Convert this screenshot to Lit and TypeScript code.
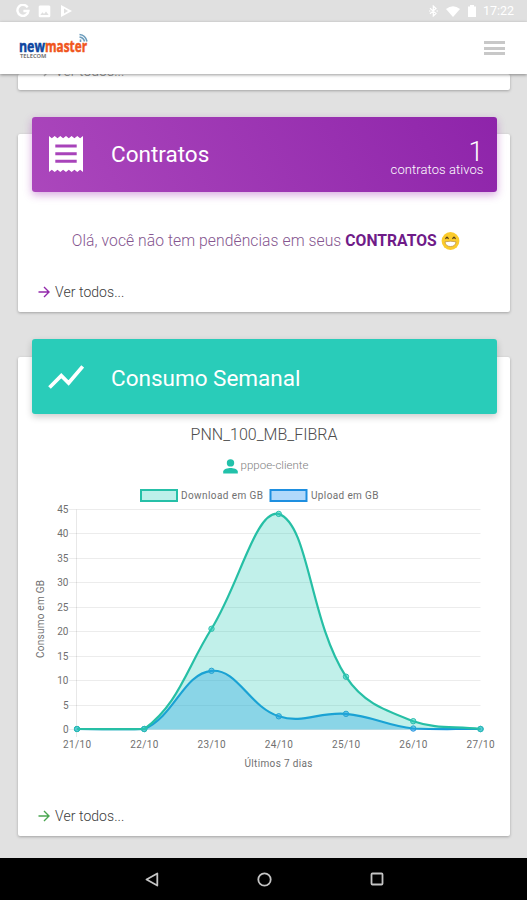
import { LitElement, html, svg, css } from "lit";
import { customElement, property } from "lit/decorators.js";

type Pt = { x: number; y: number };

const DAYS = ["21/10", "22/10", "23/10", "24/10", "25/10", "26/10", "27/10"];
const DOWNLOAD = [0.1, 0.1, 20.6, 44.1, 10.8, 1.7, 0.1];
const UPLOAD = [0.1, 0.1, 12, 2.7, 3.2, 0.2, 0.1];
const TICKS = [0, 5, 10, 15, 20, 25, 30, 35, 40, 45];

// Plot area inside the chart's own coordinate system
const LEFT = 59;
const RIGHT = 462.5;
const TOP = 24.5;
const BOTTOM = 244.5;

const toPoints = (values: number[]): Pt[] =>
  values.map((v, i) => ({
    x: LEFT + ((RIGHT - LEFT) * i) / (values.length - 1),
    y: BOTTOM - ((BOTTOM - TOP) * v) / 45,
  }));

// Smooth cubic path with tension, control points kept inside the plot area
function curve(points: Pt[], tension = 0.4): string {
  const clamp = (y: number) => Math.min(BOTTOM, Math.max(TOP, y));
  const controls = points.map((p, i) => {
    const prev = points[i - 1] ?? p;
    const next = points[i + 1] ?? p;
    const d01 = Math.hypot(p.x - prev.x, p.y - prev.y);
    const d12 = Math.hypot(next.x - p.x, next.y - p.y);
    const a = (tension * d01) / (d01 + d12);
    const b = (tension * d12) / (d01 + d12);
    return {
      inX: p.x - a * (next.x - prev.x),
      inY: clamp(p.y - a * (next.y - prev.y)),
      outX: p.x + b * (next.x - prev.x),
      outY: clamp(p.y + b * (next.y - prev.y)),
    };
  });
  let d = `M${points[0].x} ${points[0].y}`;
  for (let i = 1; i < points.length; i++) {
    const c0 = controls[i - 1];
    const c1 = controls[i];
    d += ` C${c0.outX} ${c0.outY} ${c1.inX} ${c1.inY} ${points[i].x} ${points[i].y}`;
  }
  return d;
}

@customElement("status-bar")
export class StatusBar extends LitElement {
  static styles = css`
    :host {
      display: flex;
      justify-content: space-between;
      align-items: center;
      height: 22px;
      box-sizing: border-box;
      padding: 0 12px 0 16px;
      background: #e0e0e0;
      color: #fff;
      fill: #fff;
    }
    .group { display: flex; align-items: center; }
    .left { gap: 8px; }
    .bt { margin-right: 8px; }
    .wifi { margin-right: 8px; }
    .batt { margin-right: 7px; }
    svg { display: block; }
    .clock { font-size: 12.5px; line-height: 22px; width: 32px; white-space: nowrap; }
  `;
  render() {
    return html`
      <div class="group left">
        <svg width="14" height="14" viewBox="0 0 14 14">
          <path d="M11.6 3.4A5.5 5.5 0 1 0 12.4 7H7.4" fill="none" stroke="#fff" stroke-width="2.4" />
        </svg>
        <svg width="13" height="13" viewBox="0 0 13 13">
          <path fill-rule="evenodd" d="M2 .5h9A1.3 1.3 0 0 1 12.3 2v9a1.3 1.3 0 0 1-1.3 1.3H2A1.3 1.3 0 0 1 .7 11V2A1.3 1.3 0 0 1 2 .5ZM2.3 10h8.4L8 6.4 6 9 4.500 7.300Z" />
        </svg>
        <svg width="14" height="14" viewBox="0 0 14 14">
          <path d="M2 1 13 7 2 13Z" /><path d="M5 4.500 9 7 5 9.500Z" fill="#e0e0e0" />
        </svg>
      </div>
      <div class="group">
        <svg class="bt" width="9" height="12" viewBox="0 0 9 12">
          <path d="M1 3.200 7 8.500 4.300 11V1L7 3.500 1 8.800M0 6h1.500M7.500 6H9" fill="none" stroke="#fff" stroke-width="1.200" />
        </svg>
        <svg class="wifi" width="14" height="11" viewBox="0 0 14 11"><path d="M0 3Q7-2.500 14 3L7 11Z" /></svg>
        <svg class="batt" width="8" height="12" viewBox="0 0 8 12"><path d="M0 1.500h2V0h4v1.500h2V12H0Z" /></svg>
        <span class="clock">17:22</span>
      </div>
    `;
  }
}

@customElement("top-header")
export class TopHeader extends LitElement {
  static styles = css`
    :host {
      display: flex;
      justify-content: space-between;
      align-items: center;
      height: 52px;
      box-sizing: border-box;
      padding: 0 22px 0 18px;
      background: #fff;
      box-shadow: 0 1px 3px rgba(0, 0, 0, 0.4);
      position: relative;
    }
    svg { display: block; overflow: visible; }
    .brand { font: 700 15.500px "Open Sans", sans-serif; stroke-width: 0.5; }
    .new { fill: #0d459f; stroke: #0d459f; }
    .master { fill: #f0561d; stroke: #f0561d; }
    .tag { font: 700 4.5px "Open Sans", sans-serif; fill: #777; }
    .menu { display: grid; gap: 2.500px; width: 21px; }
    .menu i { height: 3px; background: #c8c8c8; }
  `;
  render() {
    return html`
      <svg width="74" height="32" viewBox="0 0 74 32">
        <text class="brand new" x="1" y="20" textLength="26" lengthAdjust="spacingAndGlyphs">new</text>
        <text class="brand master" x="27" y="20" textLength="42" lengthAdjust="spacingAndGlyphs">master</text>
        <text class="tag" x="2" y="25.500" textLength="26.500" lengthAdjust="spacingAndGlyphs">TELECOM</text>
        <path d="M61.500 2.500Q67.500 3 69 9.500M61.500 5Q65.500 5.500 66.500 9.500M62.500 7.500v2.500" fill="none" stroke="#6b9cbc" stroke-width="1.600" />
      </svg>
      <div class="menu"><i></i><i></i><i></i></div>
    `;
  }
}

@customElement("see-all")
export class SeeAll extends LitElement {
  @property() color = "#8e24aa";
  static styles = css`
    :host {
      display: flex;
      align-items: center;
      gap: 5px;
      font-size: 14px;
      line-height: 18px;
      font-weight: 300;
      color: #3c3c3c;
    }
    svg { display: block; }
    span { letter-spacing: 0.06px; }
  `;
  render() {
    return html`
      <svg width="12" height="12" viewBox="0 0 12 12">
        <path d="M0.500 6H11M6 1 11 6 6 11" fill="none" stroke=${this.color} stroke-width="1.400" />
      </svg>
      <span>Ver todos...</span>
    `;
  }
}

@customElement("usage-chart")
export class UsageChart extends LitElement {
  static styles = css`
    :host { display: block; }
    svg { display: block; font-family: Roboto, sans-serif; }
    text { font-size: 10px; fill: #707070; }
    .grid { stroke: rgba(0, 0, 0, 0.075); stroke-width: 1; }
    .axis { stroke: rgba(0, 0, 0, 0.09); stroke-width: 1; }
    .down-fill { fill: rgba(41, 204, 184, 0.29); }
    .down-line { fill: none; stroke: #26bfa5; stroke-width: 2.200; }
    .down-dot { fill: rgba(41, 204, 184, 0.5); stroke: #2bbfae; }
    .up-fill { fill: rgba(33, 150, 243, 0.35); }
    .up-line { fill: none; stroke: #1492e0; stroke-width: 2.200; }
    .up-dot { fill: rgba(33, 150, 243, 0.5); stroke: #2295dc; }
    .down-key { fill: #bdf0ea; stroke: #26c0a8; stroke-width: 2; }
    .up-key { fill: #b1d9fb; stroke: #1e8fe0; stroke-width: 2; }
  `;
  private fill(values: number[], name: string) {
    return svg`<path class="${name}-fill" d="${curve(toPoints(values))} L${RIGHT} ${BOTTOM} L${LEFT} ${BOTTOM} Z"></path>`;
  }
  private line(values: number[], name: string) {
    const pts = toPoints(values);
    return svg`
      <path class="${name}-line" d=${curve(pts)}></path>
      ${pts.map((p) => svg`<circle class="${name}-dot" cx=${p.x} cy=${p.y} r="2.700"></circle>`)}
    `;
  }
  render() {
    const xs = toPoints(DOWNLOAD);
    return html`
      <svg width="492" height="290" viewBox="0 0 492 290">
        <rect class="down-key" x="123" y="5" width="36" height="11"></rect>
        <text x="163" y="14" textLength="82">Download em GB</text>
        <rect class="up-key" x="252.500" y="5" width="36" height="11"></rect>
        <text x="293" y="14" textLength="67.500">Upload em GB</text>
        ${TICKS.map((t) => {
          const y = BOTTOM - ((BOTTOM - TOP) * t) / 45;
          const row = Math.floor(y) + 0.5;
          return svg`
            <line class="grid" x1="51" x2=${RIGHT} y1=${row} y2=${row}></line>
            <text x="50.500" y=${y + 3.5} text-anchor="end">${t}</text>`;
        })}
        <line class="axis" x1="58.500" x2="58.500" y1=${TOP} y2="252"></line>
        ${this.fill(UPLOAD, "up")} ${this.line(UPLOAD, "up")}
        ${this.fill(DOWNLOAD, "down")} ${this.line(DOWNLOAD, "down")}
        ${DAYS.map((d, i) => svg`<text x=${xs[i].x} y="263" text-anchor="middle" textLength="28">${d}</text>`)}
        <text x="260.500" y="282" text-anchor="middle" textLength="68">Últimos 7 dias</text>
        <text transform="translate(26 134) rotate(-90)" text-anchor="middle" textLength="78">Consumo em GB</text>
      </svg>
    `;
  }
}

@customElement("nav-bar")
export class NavBar extends LitElement {
  static styles = css`
    :host {
      display: flex;
      justify-content: center;
      align-items: center;
      gap: 98px;
      height: 42px;
      box-sizing: border-box;
      padding-left: 1px;
      background: #000;
    }
    svg { display: block; fill: none; stroke: #c4c4c4; stroke-width: 1.800; }
  `;
  render() {
    return html`
      <svg width="14" height="15" viewBox="0 0 14 15"><path d="M12.300 1.500v12L1.500 7.500Z" stroke-linejoin="round" /></svg>
      <svg width="15" height="15" viewBox="0 0 15 15"><circle cx="7.500" cy="7.500" r="6.200" /></svg>
      <svg width="14" height="14" viewBox="0 0 14 14"><rect x="1.500" y="1.500" width="11" height="11" rx="1" /></svg>
    `;
  }
}

@customElement("app-root")
export class AppRoot extends LitElement {
  static styles = css`
    :host {
      display: flex;
      flex-direction: column;
      width: 527px;
      height: 900px;
      overflow: hidden;
      background: #e1e1e1;
      font-family: Roboto, "Noto Sans", sans-serif;
    }
    svg { display: block; }
    status-bar, top-header, nav-bar { flex: none; }
    top-header { z-index: 1; }
    main {
      flex: 1;
      min-height: 0;
      display: flex;
      flex-direction: column;
      padding: 0 17px 0 18px;
      overflow: hidden;
    }
    .card {
      display: flex;
      flex-direction: column;
      flex: none;
      box-sizing: border-box;
      background: #fff;
      border-radius: 2px;
      box-shadow: 0 1px 3px rgba(0, 0, 0, 0.28);
    }
    .previous { height: 16px; }
    .previous see-all { margin: -12px 0 0 20px; opacity: 0.6; }
    .contracts { height: 178px; margin-top: 44px; }
    .usage { height: 479px; margin-top: 45px; }
    .banner {
      display: flex;
      align-items: center;
      flex: none;
      height: 75px;
      box-sizing: border-box;
      margin: -18px 13.500px 0;
      padding: 0 13px 0 17px;
      border-radius: 3px;
      color: #fff;
    }
    .contracts .banner { margin-top: -17.500px; }
    .purple {
      background: linear-gradient(60deg, #ab47bc, #8e24aa);
      box-shadow: 0 3px 8px rgba(156, 39, 176, 0.4);
    }
    .teal {
      background: #29ccb9;
      box-shadow: 0 3px 7px rgba(0, 0, 0, 0.2);
    }
    .icon { width: 36px; margin: 0 27.500px 0 -1px; }
    .title {
      flex: 1;
      padding-top: 3px;
      font-size: 22.500px;
      line-height: 30px;
      white-space: nowrap;
    }
    .purple .title { padding-top: 0; }
    .count { text-align: right; font-weight: 300; padding-top: 5px; }
    .number { font-size: 27px; line-height: 26px; padding-top: 3px; }
    .unit { font-size: 13px; line-height: 16px; margin-top: -3px; white-space: nowrap; letter-spacing: 0.08px; }
    .message {
      display: flex;
      justify-content: center;
      align-items: center;
      margin: 39.500px 0 0 4px;
      font-size: 15.700px;
      line-height: 20px;
      font-weight: 300;
      color: #85568f;
      white-space: nowrap;
    }
    .message span { letter-spacing: 0.06px; }
    .message b { font-weight: 700; color: #6f1b88; margin: 0 4.500px 0 4px; }
    .card > see-all { margin-left: 20px; }
    .contracts > see-all { margin-top: 32px; }
    .plan {
      margin-top: 11px;
      text-align: center;
      font-size: 16px;
      line-height: 20px;
      font-weight: 300;
      color: #4c4c4c;
    }
    .login {
      display: flex;
      justify-content: center;
      align-items: center;
      gap: 3px;
      height: 16px;
      margin: 12px 0 12px 3px;
      font-size: 11.500px;
      font-weight: 300;
      color: #808080;
    }
    .login svg { margin-top: 3px; }
    .usage > see-all { margin-top: 32px; }
  `;
  render() {
    return html`
      <status-bar></status-bar>
      <top-header></top-header>
      <main>
        <section class="card previous"><see-all color="#888"></see-all></section>

        <section class="card contracts">
          <div class="banner purple">
            <svg class="icon" width="36" height="38" viewBox="0 0 36 38">
              <path
                fill="#fff"
                fill-rule="evenodd"
                d="M1 1l2.800 2.300L6.700 1l2.800 2.300L12.300 1l2.800 2.300L18 1l2.800 2.300L23.600 1l2.800 2.300L29.300 1l2.800 2.300L35 1v36l-2.900-2.300L29.300 37l-2.900-2.300L23.600 37l-2.800-2.300L18 37l-2.900-2.300L12.300 37l-2.800-2.300L6.700 37l-2.900-2.300L1 37ZM7.300 9.500v3h21.400v-3ZM7.300 17.200v3h21.400v-3ZM7.300 24.800v3h21.400v-3Z"
              />
            </svg>
            <div class="title">Contratos</div>
            <div class="count">
              <div class="number">1</div>
              <div class="unit">contratos ativos</div>
            </div>
          </div>
          <div class="message">
            <span>Olá, você não tem pendências em seus</span><b>CONTRATOS</b>
            <svg width="19" height="18" viewBox="0 0 19 18">
              <circle cx="9.500" cy="9" r="8.900" fill="#fbcb2c" />
              <path d="M4.800 6.500Q6 4 7.200 6.500M11.800 6.500Q13 4 14.200 6.500" fill="none" stroke="#57401c" stroke-width="1.300" stroke-linecap="round" />
              <path d="M4 9.800Q9.500 8.600 15 9.800 14.500 14.500 9.500 14.500T4 9.800Z" fill="#fff" stroke="#b98d3c" stroke-width=".7" />
            </svg>
          </div>
          <see-all color="#9229ab"></see-all>
        </section>

        <section class="card usage">
          <div class="banner teal">
            <svg class="icon" width="36" height="26" viewBox="0 0 36 26">
              <path d="M1.500 23.500 13.300 11.700 20.600 19 34.700 2.500" fill="none" stroke="#fff" stroke-width="3.700" />
            </svg>
            <div class="title">Consumo Semanal</div>
          </div>
          <div class="plan">PNN_100_MB_FIBRA</div>
          <div class="login">
            <svg width="15" height="15" viewBox="0 0 15 15">
              <circle cx="7.500" cy="3.900" r="3.700" fill="#22c1aa" />
              <path d="M.2 14.500v-2C.2 10 5 9 7.500 9s7.300 1 7.300 3.500v2Z" fill="#22c1aa" />
            </svg>
            <span>pppoe-cliente</span>
          </div>
          <usage-chart></usage-chart>
          <see-all color="#4aa650"></see-all>
        </section>
      </main>
      <nav-bar></nav-bar>
    `;
  }
}
